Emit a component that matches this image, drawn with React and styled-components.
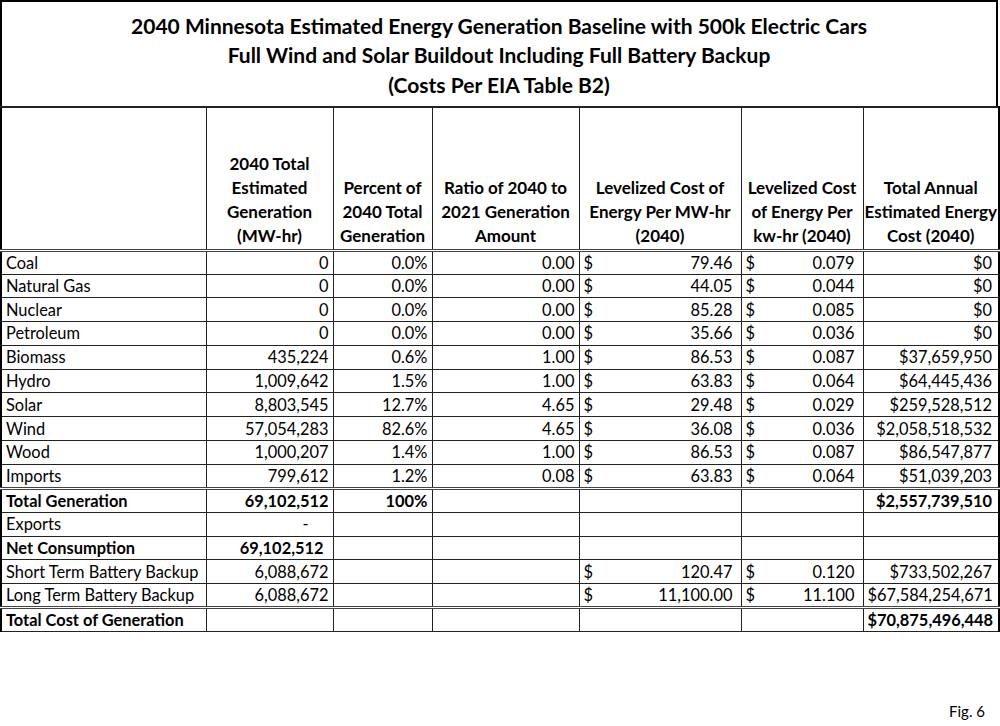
import React from 'react';
import styled, { createGlobalStyle } from 'styled-components';

const Global = createGlobalStyle`
  html, body { margin: 0; padding: 0; background: #fff; }
  body { font-family: Lato, "Open Sans", sans-serif; color: #000; }
`;

const rows = [
  { name: 'Coal', gen: '0', pct: '0.0%', ratio: '0.00', mw: '79.46', kw: '0.079', total: '$0' },
  { name: 'Natural Gas', gen: '0', pct: '0.0%', ratio: '0.00', mw: '44.05', kw: '0.044', total: '$0' },
  { name: 'Nuclear', gen: '0', pct: '0.0%', ratio: '0.00', mw: '85.28', kw: '0.085', total: '$0' },
  { name: 'Petroleum', gen: '0', pct: '0.0%', ratio: '0.00', mw: '35.66', kw: '0.036', total: '$0' },
  { name: 'Biomass', gen: '435,224', pct: '0.6%', ratio: '1.00', mw: '86.53', kw: '0.087', total: '$37,659,950' },
  { name: 'Hydro', gen: '1,009,642', pct: '1.5%', ratio: '1.00', mw: '63.83', kw: '0.064', total: '$64,445,436' },
  { name: 'Solar', gen: '8,803,545', pct: '12.7%', ratio: '4.65', mw: '29.48', kw: '0.029', total: '$259,528,512' },
  { name: 'Wind', gen: '57,054,283', pct: '82.6%', ratio: '4.65', mw: '36.08', kw: '0.036', total: '$2,058,518,532' },
  { name: 'Wood', gen: '1,000,207', pct: '1.4%', ratio: '1.00', mw: '86.53', kw: '0.087', total: '$86,547,877' },
  { name: 'Imports', gen: '799,612', pct: '1.2%', ratio: '0.08', mw: '63.83', kw: '0.064', total: '$51,039,203' },
];

const Sheet = styled.div`
  width: 998px;
`;

const TitleBox = styled.div`
  height: 106px;
  border: 2px solid #000;
  border-bottom: none;
  box-sizing: border-box;
  display: flex;
  flex-direction: column;
  align-items: center;
  justify-content: center;
  padding-top: 2px;
  font-weight: 700;
  font-size: 21px;
  line-height: 29.5px;
`;

const Table = styled.table`
  width: 998px;
  table-layout: fixed;
  border-collapse: collapse;
  font-size: 16.4px;
`;

const Row = styled.tr`
  height: 23.8px;
  border-bottom: ${p => (p.$double ? '3px double #444' : '1px solid #222')};
`;

const HeadRow = styled.tr`
  height: 143px;
  border-bottom: 3px double #444;
`;

const Th = styled.th`
  border: 1px solid #222;
  border-top: 2px solid #222;
  vertical-align: bottom;
  font-weight: 700;
  font-size: 17px;
  line-height: 24px;
  padding: 0 1px 1px;
  text-align: center;
  white-space: nowrap;
`;

const Td = styled.td`
  border-left: 1px solid ${p => (p.$faint ? '#ccc' : '#222')};
  border-right: 1px solid #222;
  padding: 0 ${p => p.$pr || 4}px 0 4px;
  text-align: ${p => p.$align || 'right'};
  font-weight: ${p => (p.$bold ? 700 : 400)};
  white-space: nowrap;
  line-height: 22px;
  &:first-child { border-left: 2px solid #000; }
  &:last-child { border-right: 2px solid #000; }
`;

const Money = styled.div`
  display: flex;
  justify-content: space-between;
`;

const FigNote = styled.div`
  width: 985px;
  text-align: right;
  font-size: 15px;
  margin-top: 70px;
`;

const Cur = ({ v }) =>
  v ? (
    <Money>
      <span>$</span>
      <span>{v}</span>
    </Money>
  ) : null;

export default function App() {
  return (
    <>
      <Global />
      <Sheet>
        <TitleBox>
          <div>2040 Minnesota Estimated Energy Generation Baseline with 500k Electric Cars</div>
          <div>Full Wind and Solar Buildout Including Full Battery Backup</div>
          <div>(Costs Per EIA Table B2)</div>
        </TitleBox>
        <Table>
          <colgroup>
            <col style={{ width: 205 }} />
            <col style={{ width: 127 }} />
            <col style={{ width: 99 }} />
            <col style={{ width: 147 }} />
            <col style={{ width: 162 }} />
            <col style={{ width: 122 }} />
            <col style={{ width: 136 }} />
          </colgroup>
          <thead>
            <HeadRow>
              <Th style={{ borderLeft: '2px solid #000' }}></Th>
              <Th>2040 Total<br />Estimated<br />Generation<br />(MW-hr)</Th>
              <Th>Percent of<br />2040 Total<br />Generation</Th>
              <Th>Ratio of 2040 to<br />2021 Generation<br />Amount</Th>
              <Th>Levelized Cost of<br />Energy Per MW-hr<br />(2040)</Th>
              <Th>Levelized Cost<br />of Energy Per<br />kw-hr (2040)</Th>
              <Th style={{ borderRight: '2px solid #000' }}>Total Annual<br />Estimated Energy<br />Cost (2040)</Th>
            </HeadRow>
          </thead>
          <tbody>
            {rows.map((r, i) => (
              <Row key={r.name} $double={i === rows.length - 1}>
                <Td $align="left">{r.name}</Td>
                <Td>{r.gen}</Td>
                <Td>{r.pct}</Td>
                <Td>{r.ratio}</Td>
                <Td $pr={8}><Cur v={r.mw} /></Td>
                <Td $pr={8}><Cur v={r.kw} /></Td>
                <Td $pr={6}>{r.total}</Td>
              </Row>
            ))}
            <Row>
              <Td $align="left" $bold>Total Generation</Td>
              <Td $bold>69,102,512</Td>
              <Td $bold>100%</Td>
              <Td />
              <Td />
              <Td />
              <Td $bold $pr={6}>$2,557,739,510</Td>
            </Row>
            <Row>
              <Td $align="left">Exports</Td>
              <Td $pr={24}>-</Td>
              <Td />
              <Td />
              <Td />
              <Td />
              <Td />
            </Row>
            <Row>
              <Td $align="left" $bold>Net Consumption</Td>
              <Td $bold $pr={9}>69,102,512</Td>
              <Td />
              <Td />
              <Td />
              <Td />
              <Td />
            </Row>
            <Row>
              <Td $align="left">Short Term Battery Backup</Td>
              <Td>6,088,672</Td>
              <Td />
              <Td />
              <Td $pr={8}><Cur v="120.47" /></Td>
              <Td $pr={8}><Cur v="0.120" /></Td>
              <Td $pr={6}>$733,502,267</Td>
            </Row>
            <Row $double>
              <Td $align="left">Long Term Battery Backup</Td>
              <Td>6,088,672</Td>
              <Td />
              <Td />
              <Td $pr={8}><Cur v="11,100.00" /></Td>
              <Td $pr={8}><Cur v="11.100" /></Td>
              <Td $pr={6}>$67,584,254,671</Td>
            </Row>
            <Row>
              <Td $align="left" $bold>Total Cost of Generation</Td>
              <Td />
              <Td $faint />
              <Td $faint />
              <Td $faint />
              <Td $faint />
              <Td $bold $pr={6} $faint>$70,875,496,448</Td>
            </Row>
          </tbody>
        </Table>
        <FigNote>Fig. 6</FigNote>
      </Sheet>
    </>
  );
}
